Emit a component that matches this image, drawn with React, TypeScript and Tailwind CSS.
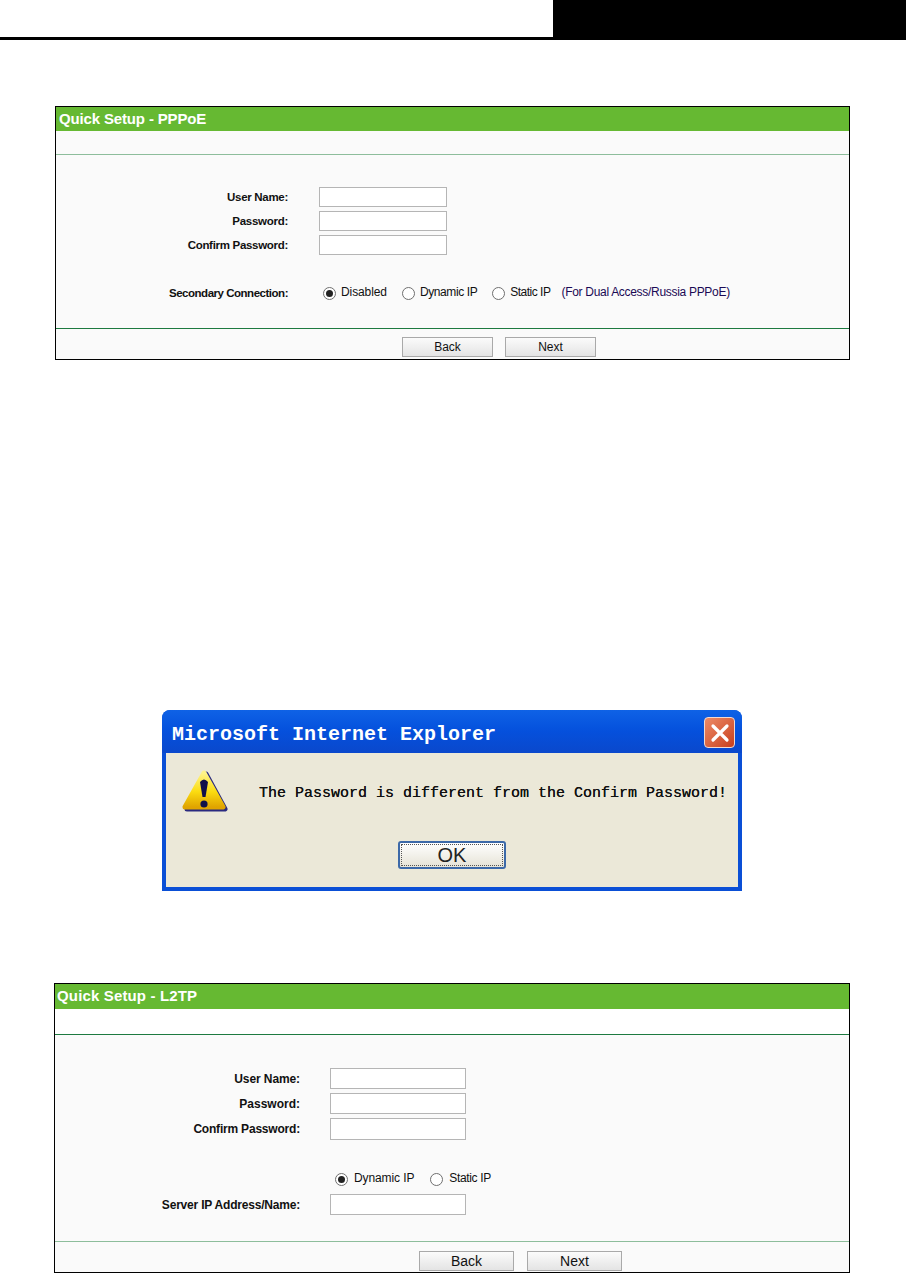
const Radio = ({ checked }: { checked?: boolean }) => {
  return (
    <span className="flex h-[13px] w-[13px] items-center justify-center rounded-full border border-[#6f6f6f] bg-white">
      {checked && <span className="h-[7px] w-[7px] rounded-full bg-[#222222]" />}
    </span>
  );
};

const Field = ({ className }: { className: string }) => {
  return <div className={`border border-[#b5b5b5] bg-white ${className}`} />;
};

const PageButton = ({ label, className }: { label: string; className: string }) => {
  return (
    <div className={`flex items-center justify-center border border-[#a9a9a9] bg-gradient-to-b from-[#fbfbfb] to-[#e4e4e4] text-[#111111] ${className}`}>
      {label}
    </div>
  );
};

const WarningIcon = () => {
  return (
    <svg width="48" height="48" viewBox="0 0 48 48">
      <defs>
        <linearGradient id="warn" x1="0" y1="0" x2="0" y2="1">
          <stop offset="0" stopColor="#fff48a" />
          <stop offset="0.55" stopColor="#fbdc10" />
          <stop offset="1" stopColor="#e0a400" />
        </linearGradient>
      </defs>
      <path d="M24 5 L43 40 L5 40 Z" fill="#2a2a80" stroke="#2a2a80" strokeWidth="5" strokeLinejoin="round" />
      <path d="M22 4 L41 38 L3 38 Z" fill="url(#warn)" stroke="url(#warn)" strokeWidth="5" strokeLinejoin="round" />
      <path d="M18 13 Q22 8 26 13 L23.5 28 L20.5 28 Z" fill="#10104a" />
      <circle cx="22" cy="35" r="3.6" fill="#10104a" />
    </svg>
  );
};

const App = () => {
  return (
    <div className="h-[1274px] w-[906px] overflow-hidden bg-white font-['Liberation_Sans',Arial,sans-serif]">
      <div className="flex h-[40px]">
        <div className="w-[553px] border-b-[3px] border-black" />
        <div className="flex-1 bg-black" />
      </div>

      {/* PPPoE */}
      <div className="ml-[55px] mt-[66px] h-[254px] w-[795px] border border-black bg-[#fafafa]">
        <div className="flex h-[24px] items-center bg-[#66b932] pl-[3px] text-[15px] font-bold tracking-[-0.15px] text-white">
          Quick Setup - PPPoE
        </div>
        <div className="h-[24px] border-b border-[#8dbd9b]" />
        <div className="h-[174px] border-b border-[#1d7a40] pt-[32px] text-[12px] text-[#111111]">
          <div className="flex h-[20px] items-center">
            <span className="w-[232px] translate-y-[1px] text-right text-[11.5px] font-bold tracking-[-0.3px]">User Name:</span>
            <Field className="ml-[31px] h-[20px] w-[128px]" />
          </div>
          <div className="mt-[4px] flex h-[20px] items-center">
            <span className="w-[232px] translate-y-[1px] text-right text-[11.5px] font-bold tracking-[-0.28px]">Password:</span>
            <Field className="ml-[31px] h-[20px] w-[128px]" />
          </div>
          <div className="mt-[4px] flex h-[20px] items-center">
            <span className="w-[232px] translate-y-[1px] text-right text-[11.5px] font-bold tracking-[-0.3px]">Confirm Password:</span>
            <Field className="ml-[31px] h-[20px] w-[128px]" />
          </div>
          <div className="mt-[30px] flex h-[16px] items-center">
            <span className="w-[232px] translate-y-[1px] text-right text-[11.5px] font-bold tracking-[-0.48px]">Secondary Connection:</span>
            <span className="ml-[35px]"><Radio checked /></span>
            <span className="ml-[5px] -translate-y-[1px] tracking-[-0.1px]">Disabled</span>
            <span className="ml-[15px]"><Radio /></span>
            <span className="ml-[5px] -translate-y-[1px] tracking-[-0.4px]">Dynamic IP</span>
            <span className="ml-[15px]"><Radio /></span>
            <span className="ml-[5px] -translate-y-[1px] tracking-[-0.5px]">Static IP</span>
            <span className="ml-[11px] -translate-y-[1px] tracking-[-0.3px] text-[#1a0a55]">(For Dual Access/Russia PPPoE)</span>
          </div>
        </div>
        <div className="flex gap-[12px] pl-[346px] pt-[8px] text-[12px]">
          <PageButton label="Back" className="h-[20px] w-[91px]" />
          <PageButton label="Next" className="h-[20px] w-[91px]" />
        </div>
      </div>

      {/* alert */}
      <div className="ml-[162px] mt-[350px] flex h-[181px] w-[580px] flex-col overflow-hidden rounded-t-[8px] bg-[#0a4fd6]">
        <div className="flex h-[43px] items-center justify-between bg-gradient-to-b from-[#0f62e6] via-[#0550dc] to-[#0a48cc] pl-[10px] pr-[7px] pt-[2px]">
          <span className="translate-y-[2px] font-['Liberation_Mono',monospace] text-[20px] font-bold leading-none text-white">
            Microsoft Internet Explorer
          </span>
          <span className="flex h-[31px] w-[31px] items-center justify-center rounded-[4px] border border-[#f3d9cf] bg-gradient-to-br from-[#ec8a66] to-[#c83d1a]">
            <svg width="20" height="20" viewBox="0 0 20 20">
              <path d="M3 3 L17 17 M17 3 L3 17" stroke="#ffffff" strokeWidth="3.2" strokeLinecap="round" />
            </svg>
          </span>
        </div>
        <div className="mx-[4px] mb-[4px] flex-1 bg-[#ebe8d8] pl-[16px]">
          <div className="flex h-[62px] items-start">
            <span className="mt-[16px]"><WarningIcon /></span>
            <span className="ml-[29px] mt-[33px] font-['Liberation_Mono',monospace] text-[15px] leading-none text-[#111111] [text-shadow:0_0_0.6px_#111111]">
              The Password is different from the Confirm Password!
            </span>
          </div>
          <div className="ml-[216px] mt-[26px] h-[28px] w-[108px] rounded-[3px] border-2 border-[#3c69a8] bg-gradient-to-b from-[#ffffff] to-[#e6e3d6] p-[1px]">
            <div className="flex h-full w-full items-center justify-center border border-dotted border-[#555555] text-[20px] leading-none text-[#222222]">
              OK
            </div>
          </div>
        </div>
      </div>

      {/* L2TP */}
      <div className="ml-[54px] mt-[92px] h-[290px] w-[796px] border border-black bg-[#fafafa]">
        <div className="flex h-[25px] items-center bg-[#66b932] pl-[2px] text-[15px] font-bold tracking-[0.15px] text-white">
          Quick Setup - L2TP
        </div>
        <div className="h-[26px] border-b border-[#1d7a40] bg-white" />
        <div className="h-[207px] border-b border-[#8dbd9b] pt-[33px] text-[12px] text-[#111111]">
          <div className="flex h-[21px] items-center">
            <span className="w-[245px] text-right font-bold tracking-[-0.1px]">User Name:</span>
            <Field className="ml-[30px] h-[21px] w-[136px]" />
          </div>
          <div className="mt-[4px] flex h-[21px] items-center">
            <span className="w-[245px] text-right font-bold">Password:</span>
            <Field className="ml-[30px] h-[21px] w-[136px]" />
          </div>
          <div className="mt-[4px] flex h-[22px] items-center">
            <span className="w-[245px] text-right font-bold tracking-[-0.2px]">Confirm Password:</span>
            <Field className="ml-[30px] h-[22px] w-[136px]" />
          </div>
          <div className="mt-[31px] flex h-[16px] items-center pl-[280px]">
            <Radio checked />
            <span className="ml-[6px] -translate-y-[1px] tracking-[-0.1px]">Dynamic IP</span>
            <span className="ml-[16px]"><Radio /></span>
            <span className="ml-[6px] -translate-y-[1px] tracking-[-0.35px]">Static IP</span>
          </div>
          <div className="mt-[7px] flex h-[21px] items-center">
            <span className="w-[245px] text-right font-bold tracking-[-0.2px]">Server IP Address/Name:</span>
            <Field className="ml-[30px] h-[21px] w-[136px]" />
          </div>
        </div>
        <div className="flex gap-[13px] pl-[364px] pt-[9px] text-[14px]">
          <PageButton label="Back" className="h-[20px] w-[95px]" />
          <PageButton label="Next" className="h-[20px] w-[95px]" />
        </div>
      </div>
    </div>
  );
};

export default App;
